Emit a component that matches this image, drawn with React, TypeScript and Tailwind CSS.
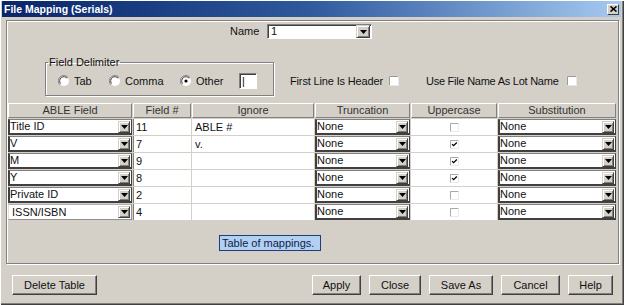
import React from "react";

function Arrow({ big }: { big?: boolean }) {
  return (
    <div
      className={`${big ? "w-[14px] h-[13px]" : "w-[12px] h-[12px]"} shrink-0 bg-[#d4d0c8] border-t border-l border-t-[#d4d0c8] border-l-[#d4d0c8] border-b border-r border-b-[#404040] border-r-[#404040] shadow-[inset_1px_1px_0_#fff,inset_-1px_-1px_0_#808080] flex items-center justify-center`}
    >
      <svg width="7" height="4" viewBox="0 0 7 4">
        <path d="M0 0h7L3.5 4z" fill="#000" />
      </svg>
    </div>
  );
}

function Radio({ checked }: { checked?: boolean }) {
  return (
    <svg width="12" height="12" viewBox="0 0 12 12" className="shrink-0">
      <circle cx="6" cy="6" r="5" fill="#fff" />
      <path d="M10 2.5A5 5 0 0 0 1.6 9.6" fill="none" stroke="#808080" strokeWidth="1" />
      <path d="M9.2 3.3A4 4 0 0 0 2.6 8.6" fill="none" stroke="#404040" strokeWidth="1" />
      {checked && <circle cx="6" cy="6" r="1.6" fill="#000" />}
    </svg>
  );
}

function Check({ checked, size = 10 }: { checked?: boolean; size?: number }) {
  return (
    <svg width={size} height={size} viewBox="0 0 10 10" className="shrink-0">
      <rect x="0" y="0" width="10" height="10" fill="#fff" />
      <path d="M0.5 9.5V0.5H9.5" fill="none" stroke="#9a9a9a" strokeWidth="1" />
      <path d="M9.5 0.5V9.5H0.5" fill="none" stroke="#e8e8e8" strokeWidth="1" />
      {checked && (
        <path d="M2.3 4.6L4 6.3L7.6 2.7" fill="none" stroke="#000" strokeWidth="1.4" />
      )}
    </svg>
  );
}

function Combo({ text, last }: { text: string; last?: boolean }) {
  return (
    <div
      className={`h-full flex items-center bg-white ${
        last
          ? "border-t border-l border-t-[#b0b0b0] border-l-[#e0e0e0] border-b border-r border-b-[#909090] border-r-[#909090] pl-[3px]"
          : "border-t border-t-[#808080] border-l-2 border-l-[#404040] border-b-2 border-b-[#404040] border-r border-r-[#404040] pl-0"
      } pr-[1px]`}
    >
      <span className="flex-1 leading-none text-[#111]">{text}</span>
      <Arrow />
    </div>
  );
}

function Btn({ label, w }: { label: string; w: string }) {
  return (
    <div
      className={`${w} h-[20px] flex items-center justify-center bg-[#d4d0c8] border-t border-l border-t-white border-l-white border-b border-r border-b-[#404040] border-r-[#404040] shadow-[inset_-1px_-1px_0_#808080] text-[11px] text-[#111]`}
    >
      {label}
    </div>
  );
}

const rows = [
  { field: "Title ID", num: "11", ignore: "ABLE #", up: false },
  { field: "V", num: "7", ignore: "v.", up: true },
  { field: "M", num: "9", ignore: "", up: true },
  { field: "Y", num: "8", ignore: "", up: true },
  { field: "Private ID", num: "2", ignore: "", up: false },
  { field: "ISSN/ISBN", num: "4", ignore: "", up: false },
];

const headers = ["ABLE Field", "Field #", "Ignore", "Truncation", "Uppercase", "Substitution"];

export default function App() {
  return (
    <div className="w-[624px] h-[305px] bg-[#d4d0c8] pl-[2px] pt-[1px] pr-[3px] pb-[2px] flex flex-col font-['Liberation_Sans',Arial,sans-serif] text-[11px] text-[#111] shadow-[inset_1px_1px_0_#fff,inset_-1px_-1px_0_#404040,inset_-2px_-2px_0_#808080] overflow-hidden">
      {/* Title bar */}
      <div className="h-[16px] shrink-0 flex items-center bg-gradient-to-r from-[#0a246a] via-[#2f5a9e] to-[#a6caf0] pl-[2px] pr-[2px]">
        <span className="flex-1 text-white font-bold text-[10.5px] leading-none">
          File Mapping (Serials)
        </span>
        <div className="w-[12px] h-[11px] bg-[#d4d0c8] border-t border-l border-t-white border-l-white border-b border-r border-b-[#404040] border-r-[#404040] flex items-center justify-center">
          <svg width="7" height="6" viewBox="0 0 7 6">
            <path d="M0.5 0.5L6.5 5.5M6.5 0.5L0.5 5.5" stroke="#000" strokeWidth="1.6" />
          </svg>
        </div>
      </div>

      {/* Frame */}
      <div className="mt-[3px] ml-[4px] w-[613px] h-[244px] shrink-0 border border-[#808080] shadow-[inset_1px_1px_0_#fff,1px_1px_0_#fff] px-[1px] pt-[1px] flex flex-col">
        {/* Name row */}
        <div className="mt-[2px] h-[15px] flex items-center">
          <span className="ml-[222px] w-[37px]">Name</span>
          <div className="w-[105px] h-[15px] flex items-center bg-white border-t border-l border-t-[#808080] border-l-[#808080] border-b border-r border-b-white border-r-white shadow-[inset_1px_1px_0_#404040] pl-[3px] pr-[1px]">
            <span className="flex-1 leading-none">1</span>
            <Arrow big />
          </div>
        </div>

        {/* Delimiter row */}
        <div className="mt-[17px] flex items-end">
          <fieldset className="ml-[37px] w-[229px] h-[40px] border border-[#808080] shadow-[inset_1px_1px_0_#fff,1px_1px_0_#fff] m-0 p-0">
            <legend className="ml-[2px] px-[1px] leading-[13px]">Field Delimiter</legend>
            <div className="mt-[4px] h-[16px] flex items-center">
              <div className="ml-[12px] w-[51px] flex items-center gap-[4px]">
                <Radio />
                <span>Tab</span>
              </div>
              <div className="w-[71px] flex items-center gap-[4px]">
                <Radio />
                <span>Comma</span>
              </div>
              <div className="w-[59px] flex items-center gap-[4px]">
                <Radio checked />
                <span>Other</span>
              </div>
              <div className="w-[18px] h-[16px] bg-white border-t border-l border-t-[#808080] border-l-[#808080] border-b border-r border-b-white border-r-white shadow-[inset_1px_1px_0_#404040] flex items-center pl-[2px] leading-none">
                |
              </div>
            </div>
          </fieldset>
          <div className="ml-[16px] mb-[7px] h-[16px] flex items-center">
            <span className="w-[99px] tracking-[-0.15px]">First Line Is Header</span>
            <Check />
            <span className="ml-[27px] w-[141px] tracking-[-0.25px]">Use File Name As Lot Name</span>
            <Check />
          </div>
        </div>

        {/* Table */}
        <div className="mt-[7px] grid grid-cols-[124px_58px_122px_95px_86px_118px] gap-x-px gap-y-px">
          {headers.map((h) => (
            <div
              key={h}
              className="h-[15px] flex items-center justify-center bg-[#d4d0c8] border-t border-l border-t-white border-l-white border-b border-r border-b-[#808080] border-r-[#808080] text-[#333] leading-none"
            >
              {h}
            </div>
          ))}
          {rows.map((r, i) => (
            <React.Fragment key={i}>
              <div className="h-[16px]">
                <Combo text={r.field} last={i === rows.length - 1} />
              </div>
              <div className="h-[16px] bg-white flex items-center pl-[2px] leading-none border-l border-l-[#808080]">
                {r.num}
              </div>
              <div className="h-[16px] bg-white flex items-center pl-[3px] leading-none">{r.ignore}</div>
              <div className="h-[16px]">
                <Combo text="None" />
              </div>
              <div className="h-[16px] bg-white flex items-center justify-center">
                <Check checked={r.up} size={9} />
              </div>
              <div className="h-[16px]">
                <Combo text="None" />
              </div>
            </React.Fragment>
          ))}
        </div>

        {/* Tooltip */}
        <div className="mt-[15px] ml-[211px] w-[102px] h-[16px] bg-[#b3d0f3] border border-[#1f3f7a] flex items-center pl-[2px] text-[#0b1d4a] leading-none">
          Table of mappings.
        </div>
      </div>

      {/* Buttons */}
      <div className="mt-[11px] pl-[10px] pr-[8px] flex items-center">
        <Btn label="Delete Table" w="w-[85px]" />
        <div className="flex-1" />
        <div className="flex items-center gap-[8px]">
          <Btn label="Apply" w="w-[49px]" />
          <Btn label="Close" w="w-[52px]" />
          <Btn label="Save As" w="w-[64px]" />
          <Btn label="Cancel" w="w-[59px]" />
          <Btn label="Help" w="w-[45px]" />
        </div>
      </div>
    </div>
  );
}
